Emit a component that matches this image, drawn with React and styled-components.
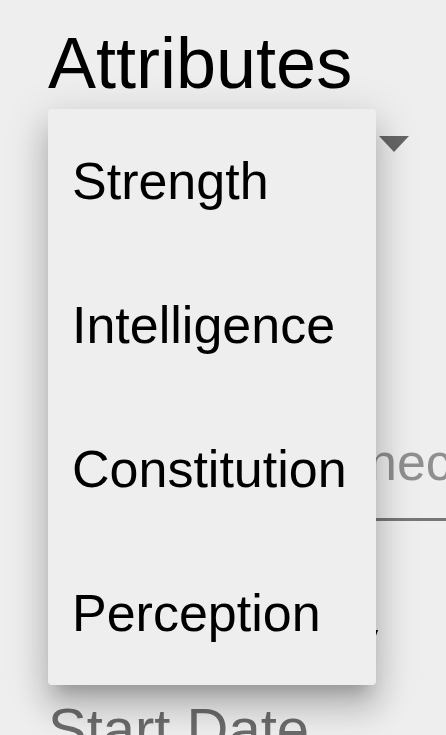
import styled, { createGlobalStyle } from "styled-components";

const GlobalStyle = createGlobalStyle`
  html, body {
    margin: 0;
    padding: 0;
    background: #eeeeee;
  }
  body {
    font-family: "Liberation Sans", Arial, Helvetica, sans-serif;
    color: #000;
  }
`;

const Page = styled.div`
  position: relative;
  height: 735px;
  overflow: hidden;
  padding: 27px 0 0 48px;
  box-sizing: border-box;
  background: #eeeeee;
`;

const Title = styled.h1`
  margin: 0;
  font-size: 72px;
  line-height: 72px;
  font-weight: 400;
  color: #000;
`;

const SelectRow = styled.div`
  width: 382px;
  height: 90px;
  box-sizing: border-box;
  padding-right: 21px;
  display: flex;
  align-items: center;
  justify-content: space-between;
  font-size: 52px;
`;

const Arrow = styled.span`
  width: 0;
  height: 0;
  border-left: 15px solid transparent;
  border-right: 15px solid transparent;
  border-top: 16px solid #666;
`;

const Field = styled.div`
  width: 460px;
  margin-top: ${(p) => p.$gap}px;
  box-sizing: border-box;
  padding: 0 0 ${(p) => (p.$underline ? 17 : 0)}px ${(p) => p.$indent}px;
  font-size: 52px;
  line-height: 78px;
  white-space: nowrap;
  color: ${(p) => (p.$muted ? "rgba(0, 0, 0, 0.4)" : "#000")};
  border-bottom: ${(p) => (p.$underline ? "3px solid #777" : "none")};
`;

const DateLabel = styled.div`
  margin-top: 22px;
  font-size: 58px;
  line-height: 58px;
  color: #6b6b6b;
  white-space: nowrap;
`;

const Menu = styled.ul`
  position: absolute;
  top: 109px;
  left: 48px;
  width: 328px;
  margin: 0;
  padding: 0;
  list-style: none;
  background: #eeeeee;
  border-radius: 4px;
  box-shadow: 0 15px 15px -9px rgba(0, 0, 0, 0.2),
    0 24px 30px 3px rgba(0, 0, 0, 0.14), 0 9px 42px 6px rgba(0, 0, 0, 0.12);
`;

const MenuItem = styled.li`
  height: 144px;
  display: flex;
  align-items: center;
  padding-left: 24px;
  font-size: 52px;
  line-height: 78px;
  color: #000;
  cursor: pointer;
`;

const attributes = ["Strength", "Intelligence", "Constitution", "Perception"];

const App = () => {
  return (
    <Page>
      <GlobalStyle />
      <Title>Attributes</Title>
      <SelectRow>
        <span>Strength</span>
        <Arrow />
      </SelectRow>
      <Field $gap={234} $indent={31} $underline $muted>
        Network connection
      </Field>
      <Field $gap={79} $indent={24}>
        Twice weekly
      </Field>
      <DateLabel>Start Date</DateLabel>

      <Menu>
        {attributes.map((name) => (
          <MenuItem key={name}>{name}</MenuItem>
        ))}
      </Menu>
    </Page>
  );
};

export default App;
